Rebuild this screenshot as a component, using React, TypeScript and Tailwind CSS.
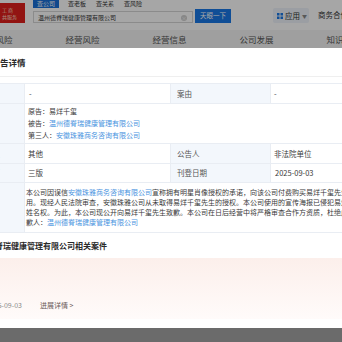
import React from "react";

const BLUE = "text-[#4a94e0]";

export default function App() {
  return (
    <div className="relative w-[342px] h-[342px] overflow-hidden bg-[#a5a5a5] font-['Noto_Sans_CJK_SC','Noto_Sans',sans-serif]">
      {/* page header */}
      <div className="relative h-[30px] bg-white">
        {/* logo */}
        <div className="absolute left-[-6px] top-[3px] w-[31px] h-[20px] bg-[#e0201c] flex flex-col justify-center pl-[8px] text-[5px] leading-[7px] text-[#ffd9c0]">
          <span>工 商</span>
          <span>共服务</span>
        </div>
        {/* tabs */}
        <div className="absolute left-[33px] top-[-3px] flex h-[11px] items-center text-[6px] text-[#333]">
          <span className="bg-[#1a6fd8] text-white h-full w-[26px] flex items-center justify-center pt-[2px]">查公司</span>
          <span className="ml-[5px] w-[26px] text-center pt-[2px]">查老板</span>
          <span className="ml-[2px] w-[26px] text-center pt-[2px]">查关系</span>
          <span className="ml-[2px] w-[26px] text-center pt-[2px]">查风险</span>
        </div>
        {/* search */}
        <div className="absolute left-[33px] top-[11px] w-[160px] h-[12px] bg-white border border-[#d6d6d6] flex items-center pl-[4px] text-[6px] text-[#333]">
          <span>温州德脊瑞健康管理有限公司</span>
          <span className="absolute right-[5px] top-[2.5px] w-[6px] h-[6px] rounded-full bg-[#cfcfcf] text-white text-[5px] leading-[6px] text-center">×</span>
        </div>
        <div className="absolute left-[195px] top-[9px] w-[36px] h-[14px] bg-[#1a78e6] text-white text-[6.5px] flex items-center justify-center">
          天眼一下
        </div>
        {/* apps */}
        <div className="absolute left-[273px] top-[8px] w-[36px] h-[15px] bg-[#eef3fa] rounded-[2px] flex items-center pl-[4px] gap-[2px] text-[7.5px] text-[#333]">
          <svg width="6" height="6" viewBox="0 0 6 6">
            <rect x="0" y="0" width="2.5" height="2.5" fill="#1a78e6" />
            <rect x="3.5" y="0" width="2.5" height="2.5" fill="#1a78e6" />
            <rect x="0" y="3.5" width="2.5" height="2.5" fill="#1a78e6" />
            <rect x="3.5" y="3.5" width="2.5" height="2.5" fill="#1a78e6" />
          </svg>
          <span>应用</span>
          <span className="text-[5px] text-[#888]">▼</span>
        </div>
        <div className="absolute left-[318px] top-[9px] text-[7.5px] text-[#333] whitespace-nowrap">商务合作</div>
      </div>
      {/* page nav */}
      <div className="h-[18px] bg-[#f4f4f4] flex ml-[-48px] items-center text-[8.5px] text-[#555] whitespace-nowrap">
        <span className="w-[87px] shrink-0 text-center">司法风险</span>
        <span className="w-[87px] shrink-0 text-center">经营风险</span>
        <span className="w-[87px] shrink-0 text-center">经营信息</span>
        <span className="w-[87px] shrink-0 text-center">公司发展</span>
        <span className="w-[87px] shrink-0 text-center">知识产权</span>
      </div>
      <div className="h-[294px] bg-[#a5a5a5]" />

      {/* overlay */}
      <div className="absolute inset-0 bg-black/[0.35]" />

      {/* modal */}
      <div className="absolute left-0 right-0 top-[48px] h-[280px] bg-white overflow-hidden">
        <div className="ml-[-36px] w-[440px]">
          <div className="h-[29px] pt-[8px] pl-[27.5px] border-b border-[#efefef] text-[8.5px] leading-[12px] font-semibold text-[#2a2a2a]">
            公告详情
          </div>
          <div className="mt-[6px] grid grid-cols-[61px_146px_100px_1fr] border-t border-[#e9edf3] text-[7.5px] text-[#3a3a3a]">
            {/* row 1 */}
            <div className="h-[20px] bg-[#f3f7fc] border-b border-r border-[#e9edf3] flex items-center pl-[6px] text-[#555]">公告号</div>
            <div className="h-[20px] border-b border-r border-[#e9edf3] flex items-center pl-[4px]">-</div>
            <div className="h-[20px] bg-[#f3f7fc] border-b border-r border-[#e9edf3] flex items-center pl-[6px] text-[#555]">案由</div>
            <div className="h-[20px] border-b border-[#e9edf3] flex items-center pl-[3px]">-</div>
            {/* row 2 */}
            <div className="h-[40px] bg-[#f3f7fc] border-b border-r border-[#e9edf3] flex items-center pl-[6px] text-[#555]">当事人</div>
            <div className="col-span-3 h-[40px] border-b border-[#e9edf3] pt-[1px] pl-[3px] text-[7px] leading-[12px] whitespace-nowrap">
              <div>原告：易烊千玺</div>
              <div>被告：<span className={BLUE}>温州德脊瑞健康管理有限公司</span></div>
              <div>第三人：<span className={BLUE}>安徽珠雅商务咨询有限公司</span></div>
            </div>
            {/* row 3 */}
            <div className="h-[20px] bg-[#f3f7fc] border-b border-r border-[#e9edf3] flex items-center pl-[6px] text-[#555]">公告类型</div>
            <div className="h-[20px] border-b border-r border-[#e9edf3] flex items-center pl-[3px]">其他</div>
            <div className="h-[20px] bg-[#f3f7fc] border-b border-r border-[#e9edf3] flex items-center pl-[6px] text-[#555]">公告人</div>
            <div className="h-[20px] border-b border-[#e9edf3] flex items-center pl-[3px]">非法院单位</div>
            {/* row 4 */}
            <div className="h-[19px] bg-[#f3f7fc] border-b border-r border-[#e9edf3] flex items-center pl-[6px] text-[#555]">刊登版面</div>
            <div className="h-[19px] border-b border-r border-[#e9edf3] flex items-center pl-[3px]">三版</div>
            <div className="h-[19px] bg-[#f3f7fc] border-b border-r border-[#e9edf3] flex items-center pl-[6px] text-[#555]">刊登日期</div>
            <div className="h-[19px] border-b border-[#e9edf3] flex items-center pl-[4px]">2025-09-03</div>
            {/* row 5 */}
            <div className="h-[50px] bg-[#f3f7fc] border-b border-r border-[#e9edf3] flex items-center pl-[6px] text-[#555]">内容</div>
            <div className="col-span-3 h-[50px] border-b border-[#e9edf3] pt-[4px] pl-[1px] text-[7px] leading-[10px] whitespace-nowrap text-[#3a3a3a]">
              <div>本公司因误信<span className={BLUE}>安徽珠雅商务咨询有限公司</span>宣称拥有明星肖像授权的承诺，向该公司付费购买易烊千玺先生肖像使</div>
              <div>用。现经人民法院审查，安徽珠雅公司从未取得易烊千玺先生的授权。本公司使用的宣传海报已侵犯易烊千玺先生肖像权及</div>
              <div>姓名权。为此，本公司现公开向易烊千玺先生致歉。本公司在日后经营中将严格审查合作方资质，杜绝此类事件再次发生。致</div>
              <div>歉人：<span className={BLUE}>温州德脊瑞健康管理有限公司</span></div>
            </div>
          </div>
          {/* related cases */}
          <div className="mt-[7px] pl-[7px] text-[8px] leading-[12px] font-semibold text-[#2a2a2a] whitespace-nowrap">
            温州德脊瑞健康管理有限公司相关案件
          </div>
          <div className="mt-[6px] h-[61px] mr-[20px] bg-linear-to-b from-[#fcefeb] to-[#fffbfa] rounded-[3px] pt-[41px] pl-[22px] flex gap-[18px] text-[7px] leading-[12px] whitespace-nowrap">
            <span className="text-[#8a8a8a]">2025-09-03</span>
            <span className="text-[#6b5a5a]">进展详情 &gt;</span>
          </div>
        </div>
      </div>
    </div>
  );
}
